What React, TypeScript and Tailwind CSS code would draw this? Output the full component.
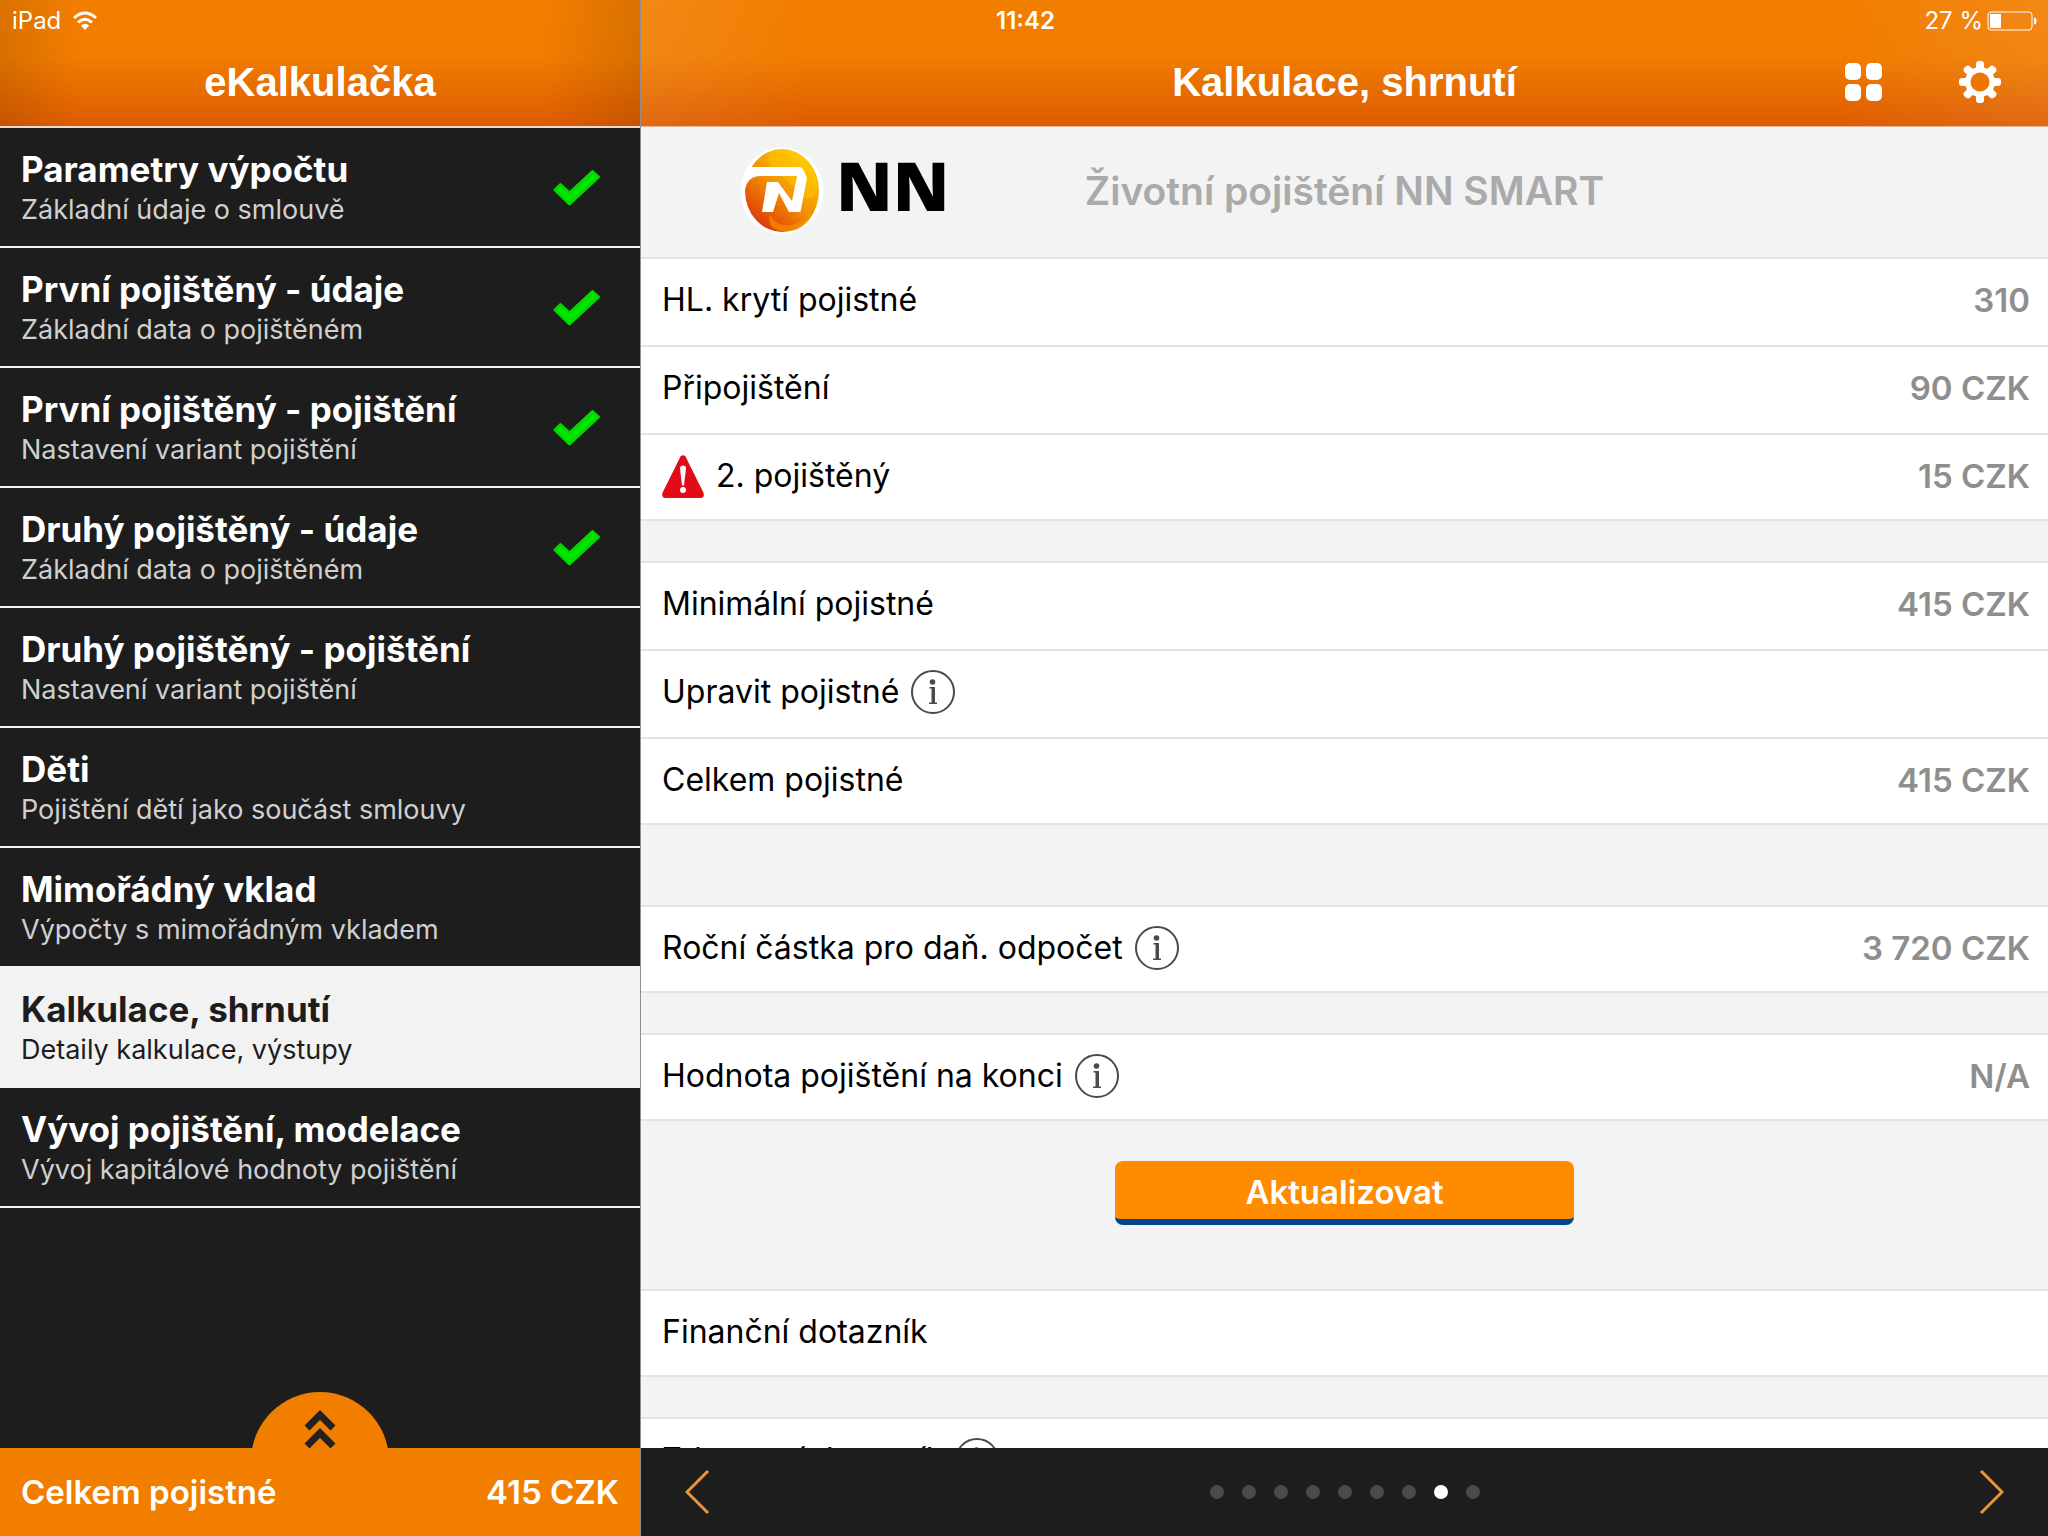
import clsx from 'clsx'

type Step = { title: string; subtitle: string; done?: boolean; active?: boolean }
type Row = { label: string; value?: string; warning?: boolean; info?: boolean }

const steps: Step[] = [
  { title: 'Parametry výpočtu', subtitle: 'Základní údaje o smlouvě', done: true },
  { title: 'První pojištěný - údaje', subtitle: 'Základní data o pojištěném', done: true },
  { title: 'První pojištěný - pojištění', subtitle: 'Nastavení variant pojištění', done: true },
  { title: 'Druhý pojištěný - údaje', subtitle: 'Základní data o pojištěném', done: true },
  { title: 'Druhý pojištěný - pojištění', subtitle: 'Nastavení variant pojištění' },
  { title: 'Děti', subtitle: 'Pojištění dětí jako součást smlouvy' },
  { title: 'Mimořádný vklad', subtitle: 'Výpočty s mimořádným vkladem' },
  { title: 'Kalkulace, shrnutí', subtitle: 'Detaily kalkulace, výstupy', active: true },
  { title: 'Vývoj pojištění, modelace', subtitle: 'Vývoj kapitálové hodnoty pojištění' },
]

const coverage: Row[] = [
  { label: 'HL. krytí pojistné', value: '310' },
  { label: 'Připojištění', value: '90 CZK' },
  { label: '2. pojištěný', value: '15 CZK', warning: true },
]

const premium: Row[] = [
  { label: 'Minimální pojistné', value: '415 CZK' },
  { label: 'Upravit pojistné', info: true },
  { label: 'Celkem pojistné', value: '415 CZK' },
]

function CheckIcon() {
  return (
    <svg width="50" height="50" viewBox="0 0 50 50" className="shrink-0">
      <path
        d="M3 28 8.500 22.500 17.500 31 40.500 9.500 46.500 15 17.500 42Z"
        fill="#00e600"
        stroke="#00d800"
        strokeWidth="3"
        strokeLinejoin="round"
      />
    </svg>
  )
}

function WarningIcon() {
  return (
    <svg width="42" height="43" viewBox="0 0 42 43" className="shrink-0">
      <path d="M18.500 1.600Q21-1.200 23.500 1.600L41.600 38Q42.600 43 38.500 43H3.500Q-.6 43 .4 38Z" fill="#e30b17" />
      <path d="M18 13.500Q18 10.500 21 10.500T24 13.500L22 30.500H20Z" fill="#fff" />
      <circle cx="21" cy="35" r="3" fill="#fff" />
    </svg>
  )
}

function InfoIcon() {
  return (
    <svg width="44" height="44" viewBox="0 0 44 44">
      <circle cx="22" cy="22" r="21" fill="none" stroke="#4a4a4a" strokeWidth="2" />
      <circle cx="21.500" cy="12" r="2.800" fill="#4a4a4a" />
      <path d="M18.500 17H24V32.500H26V34H18V32.500H20.500V18.500H18.500Z" fill="#4a4a4a" />
    </svg>
  )
}

function NNLogo() {
  return (
    <svg width="84" height="88" viewBox="0 0 84 88">
      <defs>
        <linearGradient id="ball" x1="0.800" y1="0.100" x2="0.200" y2="0.900">
          <stop offset="0" stopColor="#ffc400" />
          <stop offset="0.500" stopColor="#f39200" />
          <stop offset="1" stopColor="#dd3d0c" />
        </linearGradient>
      </defs>
      <ellipse cx="42" cy="44" rx="41.500" ry="43.500" fill="#fff" />
      <ellipse cx="42" cy="43.500" rx="37" ry="41.500" fill="url(#ball)" />
      <path d="M30 5Q50-2 66 13Q84 33 73 50Q62 56 58 44L30 18Q27 10 30 5Z" fill="#ffd000" opacity="0.400" />
      <path d="M30 68Q36 80 52 78Q68 74 76 58Q72 76 56 83Q42 87 32 80Q28 74 30 68Z" fill="#f39200" opacity="0.700" />
      <path
        d="M2 38Q4 21 11 20H59Q62 20 63.500 23L67 31L60.500 65H49L39 46L33 65H22L27 35H38L52 54L57 29H21Q8 29 5 42Z"
        fill="#fff"
      />
    </svg>
  )
}

function GearIcon() {
  return (
    <svg width="42" height="42" viewBox="0 0 42 42">
      {[0, 45, 90, 135].map(angle => (
        <rect key={angle} x="17" y="0" width="8" height="42" rx="3" fill="#fff" transform={`rotate(${angle} 21 21)`} />
      ))}
      <circle cx="21" cy="21" r="15" fill="#fff" />
      <circle cx="21" cy="21" r="9.500" fill="#eb7600" />
    </svg>
  )
}

function BatteryIcon() {
  return (
    <svg width="50" height="20" viewBox="0 0 50 20" fill="none">
      <rect x="1" y="1" width="44" height="18" rx="3" stroke="#fff" />
      <rect x="3" y="3" width="11" height="14" fill="#fff" />
      <path d="M47 6.500Q49.500 6.500 49.500 10T47 13.500Z" fill="#fff" />
    </svg>
  )
}

function WifiIcon() {
  return (
    <svg width="24" height="20" viewBox="0 0 24 20" fill="none" stroke="#fff" strokeWidth="3">
      <path d="M1 7Q12-3 23 7" />
      <path d="M5 11.500Q12 5 19 11.500" />
      <path d="M12 19 7.800 14.500Q12 11 16.200 14.500Z" fill="#fff" stroke="none" />
    </svg>
  )
}

function StepItem({ step }: { step: Step }) {
  return (
    <li>
      <a
        href="#"
        aria-current={step.active ? 'page' : undefined}
        className={clsx(
          'flex h-[120px] items-center justify-between border-b-2 border-[#f2f2f2] pl-[21px] pr-[38px]',
          step.active ? 'bg-[#f2f2f2] text-[#1d1d1d]' : 'text-white',
        )}
      >
        <span className="flex flex-col pt-1">
          <span className="text-[35px] leading-[41px] font-bold">{step.title}</span>
          <span className={clsx('text-[27px] leading-[40px]', !step.active && 'text-[#d0d0d0]')}>{step.subtitle}</span>
        </span>
        {step.done && <CheckIcon />}
      </a>
    </li>
  )
}

function RowGroup({ rows }: { rows: Row[] }) {
  return (
    <dl className="border-b-2 border-[#e3e3e3] bg-white">
      {rows.map((row, i) => (
        <div
          key={row.label}
          className={clsx(
            'flex items-center justify-between border-t-2 border-[#e3e3e3] pr-[18px] pl-[21px] leading-[40px]',
            i === rows.length - 1 ? 'h-[86px] pb-0.5' : 'h-[88px] pb-1',
          )}
        >
          <dt className="flex items-center gap-3 text-[32px] text-black">
            {row.warning && <WarningIcon />}
            {row.label}
            {row.info && (
              <button type="button" aria-label="Informace">
                <InfoIcon />
              </button>
            )}
          </dt>
          <dd className="text-[33px] font-semibold text-[#8e8e8e]">{row.value}</dd>
        </div>
      ))}
    </dl>
  )
}

export default function App() {
  return (
    <div className="flex h-screen overflow-hidden bg-[#f3f3f3] font-['Inter','Liberation_Sans',sans-serif]">
      <aside className="flex w-[641px] shrink-0 flex-col border-r border-[#8e8e93] bg-[#1d1d1d]">
        <header className="flex h-32 flex-col border-b-2 border-[#f4d8cc] bg-[linear-gradient(90deg,#0000001a,#00000000_12%,#00000000_85%,#0000001a),linear-gradient(#f27e00,#f07c00_45%,#dd5c00)]">
          <div className="flex h-[42px] items-center gap-3 px-3 text-[24px] leading-[28px] text-white">
            <span>iPad</span>
            <WifiIcon />
          </div>
          <h1 className="pt-[18px] text-center font-['Liberation_Sans',sans-serif] text-[40px] leading-[44px] font-bold text-white">
            eKalkulačka
          </h1>
        </header>

        <nav className="flex-1">
          <ul>
            {steps.map(step => <StepItem key={step.title} step={step} />)}
          </ul>
        </nav>

        <div className="flex h-14 justify-center overflow-hidden">
          <button
            type="button"
            aria-label="Rozbalit souhrn"
            className="flex size-[138px] shrink-0 items-start justify-center rounded-full bg-[#f27e00] pt-[18px]"
          >
            <svg width="32" height="38" viewBox="0 0 32 38" fill="none" stroke="#222" strokeWidth="7">
              <path d="M3 18 16 5 29 18" />
              <path d="M3 36 16 23 29 36" />
            </svg>
          </button>
        </div>
        <footer className="flex h-[88px] items-center justify-between bg-[#f27e00] px-[21px] text-[33px] leading-[40px] font-semibold text-white">
          <span>Celkem pojistné</span>
          <span>415 CZK</span>
        </footer>
      </aside>

      <main className="flex min-w-0 flex-1 flex-col">
        <header className="h-[127px] shrink-0 border-b border-[#e9b49b] bg-[linear-gradient(90deg,#ffffff14,#ffffff00_12%,#ffffff00_85%,#ffffff14),linear-gradient(#f27e00,#f07c00_45%,#dd5c00)] text-white">
          <div className="flex h-[42px] items-center justify-between pr-[11px] pl-[355px] text-[24px] leading-[28px]">
            <time className="font-semibold">11:42</time>
            <span className="flex items-center gap-1">
              27 %
              <BatteryIcon />
            </span>
          </div>
          <div className="grid grid-cols-[1fr_auto_1fr] items-center pt-[18px] pr-[47px]">
            <h2 className="col-start-2 pl-[47px] font-['Liberation_Sans',sans-serif] text-[40px] leading-[44px] font-bold">
              Kalkulace, shrnutí
            </h2>
            <div className="flex items-center justify-end gap-[77px]">
              <button type="button" aria-label="Přehled">
                <svg width="37" height="38" viewBox="0 0 37 38" fill="#fff">
                  <rect width="16" height="17" rx="5" />
                  <rect x="21" width="16" height="17" rx="5" />
                  <rect y="21" width="16" height="17" rx="5" />
                  <rect x="21" y="21" width="16" height="17" rx="5" />
                </svg>
              </button>
              <button type="button" aria-label="Nastavení">
                <GearIcon />
              </button>
            </div>
          </div>
        </header>

        <div className="min-h-0 flex-1 overflow-hidden">
          <div className="grid h-[130px] grid-cols-[1fr_auto_1fr] items-center pb-0.5">
            <div className="flex items-center gap-3 pl-[99px]">
              <NNLogo />
              <span className="pb-3 font-['Open_Sans',sans-serif] text-[68px] leading-[80px] font-extrabold text-black">NN</span>
            </div>
            <h3 className="text-[39px] leading-[44px] font-semibold text-[#aaa]">
              Životní pojištění NN SMART
            </h3>
          </div>

          <div className="flex flex-col gap-10">
            <RowGroup rows={coverage} />
            <RowGroup rows={premium} />
            <div className="pt-10">
              <RowGroup rows={[{ label: 'Roční částka pro daň. odpočet', value: '3 720 CZK', info: true }]} />
            </div>
            <RowGroup rows={[{ label: 'Hodnota pojištění na konci', value: 'N/A', info: true }]} />
            <button
              type="button"
              className="mb-6 h-16 w-[459px] self-center rounded-lg border-b-6 border-[#00468c] bg-[#ff8c00] pt-1 text-[33px] leading-[40px] font-semibold text-white"
            >
              Aktualizovat
            </button>
            <RowGroup rows={[{ label: 'Finanční dotazník' }]} />
            <RowGroup rows={[{ label: 'Zdravotní dotazník', value: '0', info: true }]} />
          </div>
        </div>

        <footer className="grid h-[88px] shrink-0 grid-cols-[1fr_auto_1fr] items-center bg-[#1d1d1d] px-11">
          <button type="button" aria-label="Předchozí" className="justify-self-start">
            <svg width="25" height="45" viewBox="0 0 25 45" fill="none" stroke="#e8973a" strokeWidth="3">
              <path d="M23 1 2 22 23 43" />
            </svg>
          </button>
          <div className="flex gap-[18px]">
            {steps.map(step => (
              <span key={step.title} className={clsx('size-[14px] rounded-full', step.active ? 'bg-white' : 'bg-[#4a4a4a]')} />
            ))}
          </div>
          <button type="button" aria-label="Další" className="justify-self-end">
            <svg width="25" height="45" viewBox="0 0 25 45" fill="none" stroke="#e8973a" strokeWidth="3">
              <path d="M2 1 23 22 2 43" />
            </svg>
          </button>
        </footer>
      </main>
    </div>
  )
}
